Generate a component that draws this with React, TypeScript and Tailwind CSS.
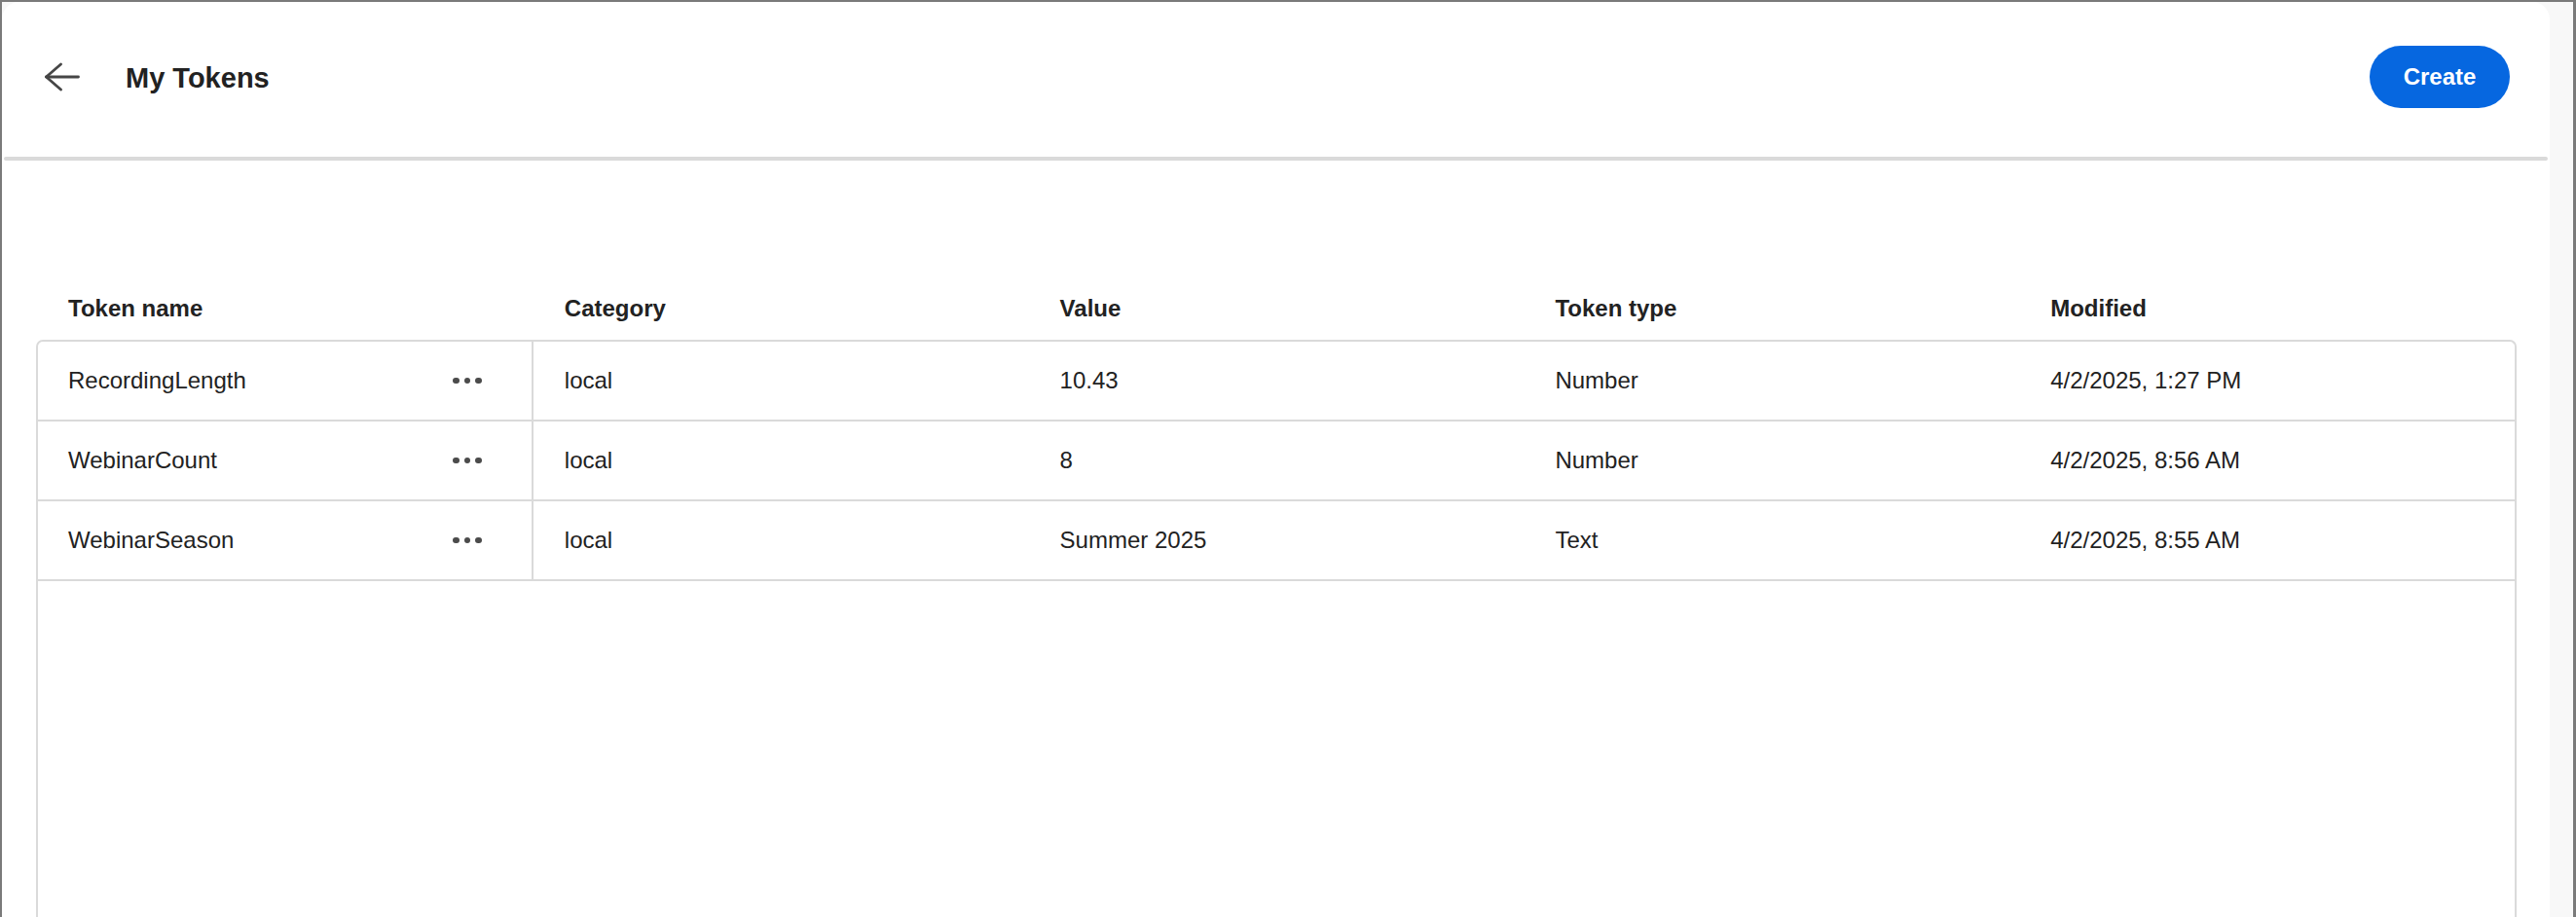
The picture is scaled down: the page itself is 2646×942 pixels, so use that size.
import React from "react";

const rows = [
  { name: "RecordingLength", category: "local", value: "10.43", type: "Number", modified: "4/2/2025, 1:27 PM" },
  { name: "WebinarCount", category: "local", value: "8", type: "Number", modified: "4/2/2025, 8:56 AM" },
  { name: "WebinarSeason", category: "local", value: "Summer 2025", type: "Text", modified: "4/2/2025, 8:55 AM" },
];

function BackArrow() {
  return (
    <svg width="36" height="30" viewBox="0 0 36 30" fill="none" stroke="#464646" strokeWidth="2.8" strokeLinecap="round" strokeLinejoin="round">
      <path d="M1.5 15 H34.5" />
      <path d="M16.5 2 L1.5 15 L16.5 28" />
    </svg>
  );
}

function Dots() {
  return (
    <div className="flex items-center gap-[5px]">
      <span className="block w-[6.5px] h-[6.5px] rounded-full bg-[#4b4b4b]" />
      <span className="block w-[6.5px] h-[6.5px] rounded-full bg-[#4b4b4b]" />
      <span className="block w-[6.5px] h-[6.5px] rounded-full bg-[#4b4b4b]" />
    </div>
  );
}

export default function App() {
  return (
    <div
      className="w-[2646px] h-[942px] overflow-hidden bg-[#f8f8f8] border-t-2 border-l-2 border-r-[3px] border-[#7a7a7a] flex text-[#222222]"
      style={{ fontFamily: '"Liberation Sans", Arial, sans-serif' }}
    >
      <div className="w-[2617px] h-full bg-white rounded-tl-[18px] rounded-tr-[18px] flex flex-col">
        {/* Header */}
        <div className="h-[153px] flex items-center pl-[44px] pr-[41px] shrink-0">
          <BackArrow />
          <h1 className="ml-[47px] mt-[4px] text-[29px] font-bold leading-none">My Tokens</h1>
          <div className="flex-1" />
          <button className="w-[144px] h-[64px] rounded-full bg-[#0667e0] text-white text-[24px] font-bold leading-none flex items-center justify-center">
            Create
          </button>
        </div>
        <div className="h-[6px] shrink-0" />
        <div className="h-[4px] mx-[2px] rounded-full bg-[#dadada] shrink-0" />

        {/* Content */}
        <div className="flex-1 flex flex-col pt-[120px] pl-[35px] pr-[34px] min-h-0">
          <div className="h-[64px] grid grid-cols-5 px-[2px] items-center text-[24px] font-bold shrink-0">
            <div className="pl-[31px]">Token name</div>
            <div className="pl-[32px]">Category</div>
            <div className="pl-[32px]">Value</div>
            <div className="pl-[32px]">Token type</div>
            <div className="pl-[32px]">Modified</div>
          </div>
          <div className="flex-1 border-2 border-b-0 border-[#dadada] rounded-t-[7px] text-[24px]">
            {rows.map((r) => (
              <div key={r.name} className="h-[82px] grid grid-cols-5 border-b-2 border-[#dadada]">
                <div className="flex items-center justify-between pl-[31px] pr-[51px] border-r-2 border-[#dadada]">
                  <span>{r.name}</span>
                  <Dots />
                </div>
                <div className="flex items-center pl-[32px]">{r.category}</div>
                <div className="flex items-center pl-[32px]">{r.value}</div>
                <div className="flex items-center pl-[32px]">{r.type}</div>
                <div className="flex items-center pl-[32px]">{r.modified}</div>
              </div>
            ))}
          </div>
        </div>
      </div>
      <div className="flex-1 bg-[#f8f8f8]" />
    </div>
  );
}
